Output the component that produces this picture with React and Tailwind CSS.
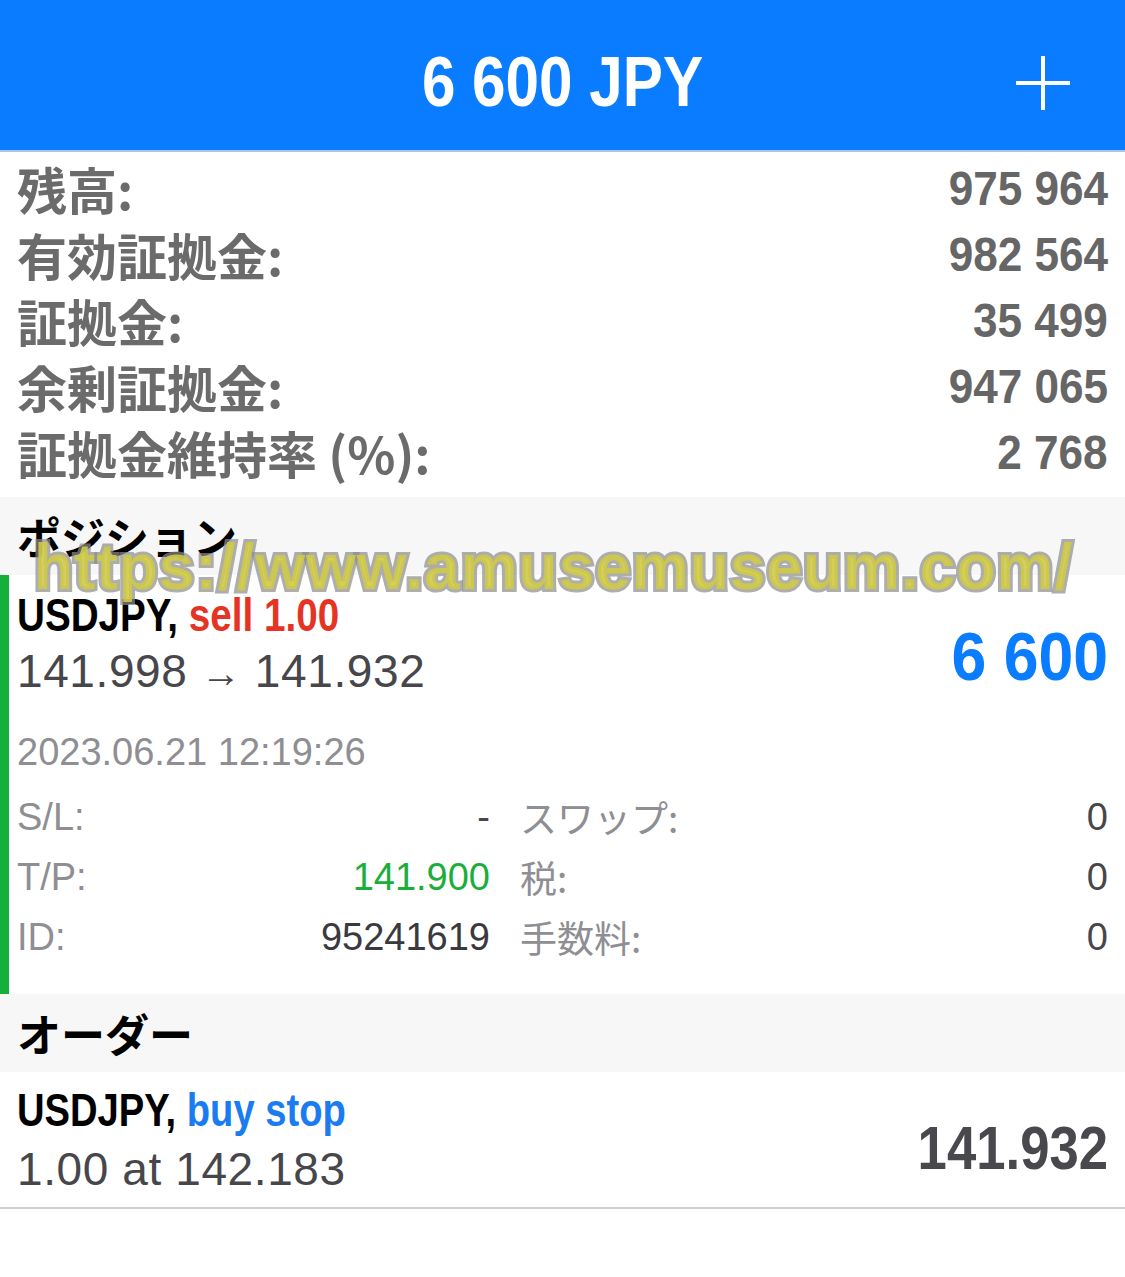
import React from "react";

const cond = "inline-block font-['Liberation_Sans',sans-serif] font-bold";
const sans = "font-['Liberation_Sans','Noto_Sans_CJK_JP',sans-serif]";
const jp = "font-['Noto_Sans_CJK_JP',sans-serif]";

const account = [
  ["残高:", "975 964"],
  ["有効証拠金:", "982 564"],
  ["証拠金:", "35 499"],
  ["余剰証拠金:", "947 065"],
  ["証拠金維持率 (%):", "2 768"],
];

const SectionHeader = ({ title }) => (
  <div className="bg-[#f7f7f7] h-[78px] flex items-center px-[17px]">
    <h2 className={`${jp} text-[44px] font-bold text-black leading-none`}>{title}</h2>
  </div>
);

export default function App() {
  return (
    <div className="relative w-[1125px] min-h-[1277px] bg-white">
      {/* top bar */}
      <header className="relative h-[152px] bg-[#0a7cff] border-b-2 border-[#a8c6e8] flex items-center justify-center pt-[14px]">
        <span className={`${cond} text-white text-[70px] leading-none scale-x-[0.86]`}>6 600 JPY</span>
        <svg className="absolute right-[54px] top-[55px]" width="56" height="56" viewBox="0 0 56 56">
          <path d="M28 1v54M1 28h54" stroke="white" strokeWidth="4" fill="none" />
        </svg>
      </header>

      {/* account summary */}
      <section className="pt-[3px] pb-[12px] px-[17px]">
        {account.map(([label, value]) => (
          <div key={label} className="h-[66px] flex items-center justify-between">
            <span className={`${jp} text-[50px] font-bold text-[#6b6b6b] leading-none`}>{label}</span>
            <span className={`${cond} text-[49px] text-[#666] leading-none origin-right scale-x-[0.9]`}>{value}</span>
          </div>
        ))}
      </section>

      <SectionHeader title="ポジション" />

      {/* position */}
      <div className="border-l-[9px] border-[#14b13a] pl-[8px] pr-[17px] pt-[14px] h-[419px]">
        <div className="flex justify-between items-start">
          <div>
            <div className={`${cond} text-[46px] leading-[52px] text-black origin-left scale-x-[0.84]`}>
              USDJPY, <span className="text-[#e53424]">sell 1.00</span>
            </div>
            <div className={`${sans} text-[46px] leading-[56px] mt-[2px] tracking-[0.6px] text-[#47474b]`}>
              141.998 <span className="text-[40px]">→</span> 141.932
            </div>
          </div>
          <div className={`${cond} text-[68px] text-[#0a7cff] leading-none mt-[33px] origin-right scale-x-[0.92]`}>6 600</div>
        </div>
        <div className={`${sans} text-[38px] text-[#8e8e93] leading-none mt-[32px]`}>2023.06.21 12:19:26</div>
        <div className={`${sans} grid grid-cols-[473px_1fr] gap-x-[30px] text-[38px] leading-[60px] mt-[16px]`}>
          <div className="flex justify-between">
            <span className="text-[#8e8e93]">S/L:</span>
            <span className="text-[#47474b]">-</span>
          </div>
          <div className="flex justify-between">
            <span className={`${jp} text-[#8e8e93] text-[37px]`}>スワップ:</span>
            <span className="text-[#47474b]">0</span>
          </div>
          <div className="flex justify-between">
            <span className="text-[#8e8e93]">T/P:</span>
            <span className="text-[#1aae3b]">141.900</span>
          </div>
          <div className="flex justify-between">
            <span className={`${jp} text-[#8e8e93] text-[37px]`}>税:</span>
            <span className="text-[#47474b]">0</span>
          </div>
          <div className="flex justify-between">
            <span className="text-[#8e8e93]">ID:</span>
            <span className="text-[#3a3a3e]">95241619</span>
          </div>
          <div className="flex justify-between">
            <span className={`${jp} text-[#8e8e93] text-[37px]`}>手数料:</span>
            <span className="text-[#47474b]">0</span>
          </div>
        </div>
      </div>

      <SectionHeader title="オーダー" />

      {/* order */}
      <div className="h-[137px] border-b-2 border-[#cfcfcf] px-[17px] pt-[12px] flex justify-between items-start">
        <div>
          <div className={`${cond} text-[46px] leading-[52px] text-black origin-left scale-x-[0.83]`}>
            USDJPY, <span className="text-[#1a7cf0]">buy stop</span>
          </div>
          <div className={`${sans} text-[46px] leading-[56px] mt-[5px] tracking-[0.6px] text-[#47474b]`}>1.00 at 142.183</div>
        </div>
        <div className={`${cond} text-[62px] text-[#48484d] leading-none mt-[33px] origin-right scale-x-[0.85]`}>141.932</div>
      </div>

      {/* watermark */}
      <div className="absolute left-[34px] top-[535px] font-['Liberation_Sans',sans-serif] font-bold text-[64px] leading-none tracking-[1px] text-[rgba(206,202,70,0.9)] [-webkit-text-stroke:6px_rgba(140,140,140,0.7)] [paint-order:stroke_fill] pointer-events-none">
        https://www.amusemuseum.com/
      </div>
    </div>
  );
}
